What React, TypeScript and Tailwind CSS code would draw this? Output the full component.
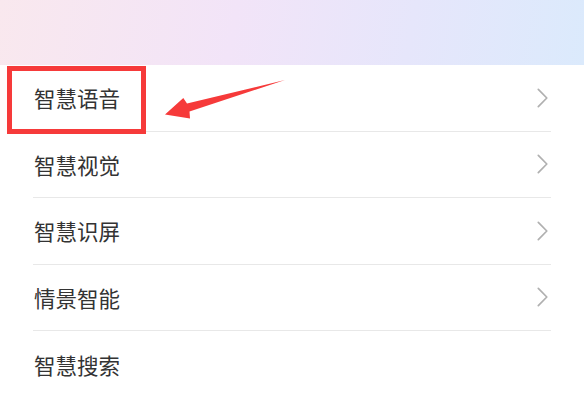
import React from "react";

const items = ["智慧语音", "智慧视觉", "智慧识屏", "情景智能", "智慧搜索"];

function Chevron() {
  return (
    <svg width="11" height="20" viewBox="0 0 11 20" fill="none">
      <path d="M1.3 1.3 L9.8 10 L1.3 18.7" stroke="#b0b0b0" strokeWidth="1.7" strokeLinecap="round" strokeLinejoin="round" />
    </svg>
  );
}

export default function App() {
  return (
    <div className="relative w-[584px] h-[418px] overflow-hidden bg-white" style={{ fontFamily: '"Noto Sans CJK SC", "Noto Sans", sans-serif' }}>
      <div className="h-[65px] bg-[linear-gradient(100deg,#f9e8ee_0%,#f2e4f8_40%,#e6e6fb_70%,#dbeafc_100%)]" />
      <div className="flex flex-col">
        {items.map((t, i) => (
          <div key={t} className="px-[33px]">
            <div className={`h-[66.5px] flex items-center justify-between ${i < items.length - 1 ? "border-b border-[#e8e8e8]" : ""}`}>
              <span className="text-[21.5px] text-[#333333] leading-none pl-[1px]">{t}</span>
              {i < 4 && (
                <div className="pr-[3px] flex items-center">
                  <Chevron />
                </div>
              )}
            </div>
          </div>
        ))}
      </div>
      <div className="absolute left-[7px] top-[66px] w-[139px] h-[68px] border-[5px] border-[#f63a3a]" />
      <svg className="absolute left-0 top-0" width="584" height="418" viewBox="0 0 584 418">
        <polygon points="285,80 187,103.5 183.3,98 165,114.5 190,118.5 189.5,111.5" fill="#f63a3a" />
      </svg>
    </div>
  );
}
